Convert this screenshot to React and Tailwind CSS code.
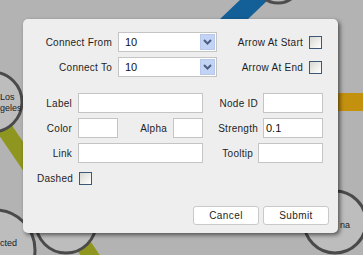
import React from 'react';

const font = { fontFamily: '"Liberation Sans", Arial, sans-serif' };

// small classic-looking checkbox
const Check = () => (
  <span className="block w-[13px] h-[13px] border border-[#3b5876] bg-linear-to-br from-[#d8d8d2] to-white" />
);

const Select = ({ value }) => (
  <div className="relative w-[99px] h-[20px] bg-white border border-[#c4c4c4] flex items-center pl-[6px] text-[11px] text-[#111]">
    {value}
    <div className="absolute right-[1px] top-[1px] bottom-[1px] w-[15px] bg-[#c3d3f3] border border-[#b7c8ea] flex items-center justify-center">
      <svg width="9" height="6" viewBox="0 0 9 6">
        <polyline points="1,1 4.5,4.5 8,1" fill="none" stroke="#4b5f86" strokeWidth="2" />
      </svg>
    </div>
  </div>
);

const Field = ({ w, value }) => (
  <div
    className="h-[20px] bg-white border border-[#c4c4c4] flex items-center pl-[2px] text-[11px] text-[#111]"
    style={{ width: w }}
  >
    {value}
  </div>
);

const Label = ({ children, className = '' }) => (
  <span className={`text-[10px] tracking-[0.25px] text-[#1e1e1e] ${className}`}>{children}</span>
);

const Background = () => (
  <svg className="absolute inset-0" width="363" height="255" viewBox="0 0 363 255">
    <rect width="363" height="255" fill="#b3b3b3" />
    {/* links */}
    <line x1="-15" y1="100" x2="107" y2="280" stroke="#8f961f" strokeWidth="16" />
    <polygon points="219,20 247,20 270,-2 242,-2" fill="#135f97" />
    <rect x="300" y="93" width="70" height="18" fill="#c4910f" />
    {/* nodes */}
    <circle cx="278" cy="-20" r="23" fill="#b9b9b9" stroke="#4d4d4d" strokeWidth="3" />
    <circle cx="-8" cy="102" r="30" fill="#bdbdbd" stroke="#4a4a4a" strokeWidth="3" />
    <circle cx="-5" cy="250" r="40" fill="#bdbdbd" stroke="#4a4a4a" strokeWidth="3" />
    <circle cx="66" cy="223" r="30" fill="#bdbdbd" stroke="#4a4a4a" strokeWidth="3" />
    <circle cx="335" cy="222" r="31" fill="#bdbdbd" stroke="#4a4a4a" strokeWidth="3" />
    <g fontFamily="Liberation Sans, Arial, sans-serif" fontSize="9" fill="#222">
      <text x="0" y="100">Los</text>
      <text x="0" y="111">geles</text>
      <text x="0" y="246">cted</text>
      <text x="340" y="228">na</text>
    </g>
  </svg>
);

export default function App() {
  return (
    <div className="relative w-[363px] h-[255px] overflow-hidden" style={font}>
      <Background />

      {/* modal dialog */}
      <div className="absolute left-[23px] top-[19px] w-[315px] h-[214px] bg-[#eeeeee] rounded-[5px] shadow-[2px_2px_4px_rgba(0,0,0,0.55)] flex flex-col pt-[13px]">
        {/* connection selects */}
        <div className="flex flex-col gap-[5px] pr-[16px]">
          <div className="flex items-center">
            <Label className="w-[89px] text-right">Connect From</Label>
            <div className="ml-[6px]"><Select value="10" /></div>
            <div className="ml-auto flex items-center gap-[6px]">
              <Label>Arrow At Start</Label>
              <Check />
            </div>
          </div>
          <div className="flex items-center">
            <Label className="w-[89px] text-right">Connect To</Label>
            <div className="ml-[6px]"><Select value="10" /></div>
            <div className="ml-auto flex items-center gap-[6px]">
              <Label>Arrow At End</Label>
              <Check />
            </div>
          </div>
        </div>

        {/* link properties */}
        <div className="flex flex-col gap-[5px] mt-[16px] pr-[15px]">
          <div className="flex items-center h-[20px]">
            <Label className="w-[49px] text-right">Label</Label>
            <div className="ml-[6px]"><Field w={125} /></div>
            <div className="ml-auto flex items-center gap-[5px]">
              <Label>Node ID</Label>
              <Field w={60} />
            </div>
          </div>
          <div className="flex items-center h-[20px]">
            <Label className="w-[49px] text-right">Color</Label>
            <div className="ml-[6px]"><Field w={40} /></div>
            <Label className="w-[49px] text-right">Alpha</Label>
            <div className="ml-[6px]"><Field w={30} /></div>
            <div className="ml-auto flex items-center gap-[5px]">
              <Label>Strength</Label>
              <Field w={60} value="0.1" />
            </div>
          </div>
          <div className="flex items-center h-[20px]">
            <Label className="w-[49px] text-right">Link</Label>
            <div className="ml-[6px]"><Field w={125} /></div>
            <div className="ml-auto flex items-center gap-[5px]">
              <Label>Tooltip</Label>
              <Field w={65} />
            </div>
          </div>
          <div className="flex items-center h-[20px]">
            <Label className="w-[50px] text-right">Dashed</Label>
            <div className="ml-[6px]"><Check /></div>
          </div>
        </div>

        {/* actions */}
        <div className="mt-auto mb-[8px] pr-[9px] flex justify-end gap-[4px]">
          <button className="w-[66px] h-[19px] bg-white border border-[#c9c9c9] rounded-[3px] text-[10px] tracking-[0.4px] text-[#1e1e1e]">
            Cancel
          </button>
          <button className="w-[66px] h-[19px] bg-white border border-[#c9c9c9] rounded-[3px] text-[10px] tracking-[0.4px] text-[#1e1e1e]">
            Submit
          </button>
        </div>
      </div>
    </div>
  );
}
